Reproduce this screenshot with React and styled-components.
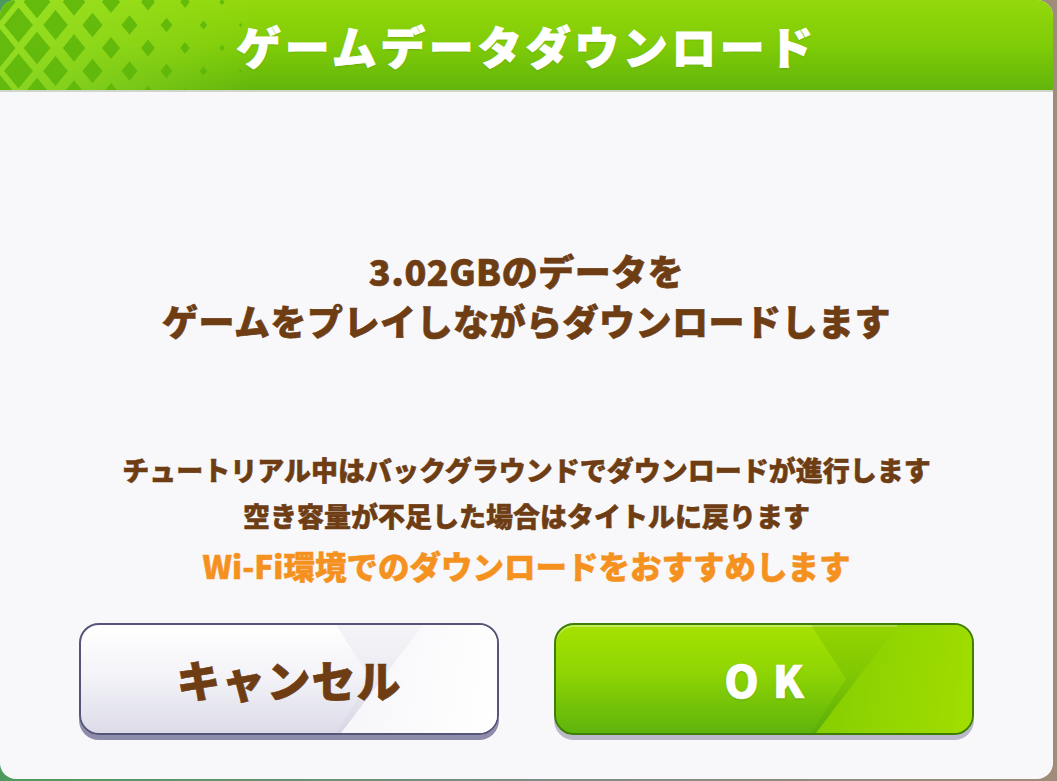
import React from 'react';
import styled, { createGlobalStyle } from 'styled-components';

const GlobalStyle = createGlobalStyle`
  html, body {
    margin: 0;
    padding: 0;
    height: 781px;
    overflow: hidden;
  }
  body {
    background: linear-gradient(90deg, #4e9a5c 0%, #7d8c86 50%, #a08c78 100%);
    font-family: "Noto Sans CJK JP", "Noto Sans", sans-serif;
  }
`;

const brown = '#6e3d13';

const Dialog = styled.div`
  width: 1053px;
  height: 779px;
  border-radius: 16px;
  overflow: hidden;
  display: flex;
  flex-direction: column;
  background: #f8f8fa;
`;

const Header = styled.div`
  position: relative;
  height: 90px;
  flex-shrink: 0;
  display: flex;
  align-items: center;
  justify-content: center;
  background: linear-gradient(180deg, #93d80b 0%, #80cc08 50%, #62b50b 100%);
  border-bottom: 2px solid #cfd5c8;
`;

const Lattice = styled.svg`
  position: absolute;
  left: 0;
  top: 0;
`;

const Title = styled.h1`
  position: relative;
  margin: 0;
  color: #ffffff;
  font-size: 45px;
  font-weight: 900;
  letter-spacing: 3.5px;
  -webkit-text-stroke: 0.8px #ffffff;
  text-shadow: 0 1px 2px rgba(60, 110, 0, 0.35);
`;

const Body = styled.div`
  flex: 1;
  display: flex;
  flex-direction: column;
  align-items: center;
  padding-top: 153px;
`;

const Message = styled.p`
  margin: 0;
  color: ${brown};
  font-size: 36px;
  font-weight: 900;
  letter-spacing: 0.5px;
  line-height: 50px;
  text-align: center;
  -webkit-text-stroke: 0.6px ${brown};
`;

const Notes = styled.div`
  margin-top: 102px;
  display: flex;
  flex-direction: column;
  align-items: center;
`;

const Note = styled.p`
  margin: 0;
  color: ${props => (props.accent ? '#f5921f' : brown)};
  font-size: ${props => (props.accent ? '31.5px' : '27px')};
  font-weight: 900;
  line-height: ${props => (props.accent ? '52px' : '46px')};
  -webkit-text-stroke: 0.5px ${props => (props.accent ? '#f5921f' : brown)};
`;

const ButtonRow = styled.div`
  margin-top: 32px;
  display: flex;
  gap: 55px;
`;

const Button = styled.button`
  position: relative;
  width: 420px;
  height: 112px;
  border-radius: 20px;
  overflow: hidden;
  cursor: pointer;
  display: flex;
  align-items: center;
  justify-content: center;
  padding: 0;
  font-family: "Noto Sans CJK JP", "Noto Sans", sans-serif;
  font-weight: 900;
  font-size: 44px;
  border: 2px solid ${props => (props.primary ? '#3e7d06' : '#55557a')};
  color: ${props => (props.primary ? '#ffffff' : brown)};
  -webkit-text-stroke: 0.6px ${props => (props.primary ? '#ffffff' : brown)};
  letter-spacing: ${props => (props.primary ? '14px' : '1px')};
  background: ${props =>
    props.primary
      ? 'linear-gradient(180deg, #a6e200 0%, #8ed404 45%, #5fb40c 100%)'
      : 'linear-gradient(180deg, #ffffff 0%, #f4f4f9 45%, #dcdbe8 100%)'};
  box-shadow: ${props =>
    props.primary
      ? '0 5px 0 #b9b9c9, inset 0 2px 0 rgba(255,255,255,0.35)'
      : '0 5px 0 #8e8cab, inset 0 2px 0 #ffffff'};
  text-shadow: ${props => (props.primary ? '0 1px 2px rgba(40,90,0,0.35)' : 'none')};

  /* chevron tint right of the ">" edge */
  &::before {
    content: '';
    position: absolute;
    inset: 0;
    clip-path: polygon(255px 0, 100% 0, 100% 100%, 255px 100%, 290px 50%);
    background: ${props =>
      props.primary ? 'rgba(70, 150, 0, 0.18)' : 'rgba(190, 190, 210, 0.16)'};
  }

  /* glossy wedge right of the "/" edge */
  &::after {
    content: '';
    position: absolute;
    inset: 0;
    clip-path: polygon(342px 0, 100% 0, 100% 100%, 260px 100%);
    background: ${props =>
      props.primary
        ? 'linear-gradient(100deg, #5cb204 0%, #78c602 45%, #a2de00 100%)'
        : 'linear-gradient(100deg, #dadae5 0%, #f2f2f7 45%, #ffffff 100%)'};
  }
`;

const Label = styled.span`
  position: relative;
  z-index: 1;
  margin-right: ${props => (props.spaced ? '-14px' : '0')};
`;

// diamond lattice in the header's left corner, fading out to the right
const diamonds = [];
for (let j = -1; j < 6; j++) {
  const offset = j % 2 === 0 ? 0 : 18.5;
  for (let i = 0; i < 8; i++) {
    const x = i * 37 + offset;
    const hx = 15.5 - x * 0.058;
    if (hx <= 1) continue;
    const hy = hx * 1.22;
    const y = j * 23 + 2;
    diamonds.push(
      `M${x} ${y - hy}L${x + hx} ${y}L${x} ${y + hy}L${x - hx} ${y}Z`
    );
  }
}

const HeaderLattice = () => (
  <Lattice width="260" height="90" viewBox="0 0 260 90">
    <defs>
      <linearGradient id="latticeFade" x1="0" y1="0" x2="1" y2="0">
        <stop offset="0" stopColor="#9be22a" stopOpacity="0.75" />
        <stop offset="0.7" stopColor="#9be22a" stopOpacity="0.25" />
        <stop offset="1" stopColor="#9be22a" stopOpacity="0" />
      </linearGradient>
    </defs>
    <rect x="0" y="0" width="260" height="90" fill="url(#latticeFade)" />
    <path d={diamonds.join('')} fill="#5cb509" opacity="0.85" />
  </Lattice>
);

const App = () => {
  return (
    <>
      <GlobalStyle />
      <Dialog>
        <Header>
          <HeaderLattice />
          <Title>ゲームデータダウンロード</Title>
        </Header>
        <Body>
          <Message>
            3.02GBのデータを
            <br />
            ゲームをプレイしながらダウンロードします
          </Message>
          <Notes>
            <Note>チュートリアル中はバックグラウンドでダウンロードが進行します</Note>
            <Note>空き容量が不足した場合はタイトルに戻ります</Note>
            <Note accent>Wi-Fi環境でのダウンロードをおすすめします</Note>
          </Notes>
          <ButtonRow>
            <Button>
              <Label>キャンセル</Label>
            </Button>
            <Button primary>
              <Label spaced>OK</Label>
            </Button>
          </ButtonRow>
        </Body>
      </Dialog>
    </>
  );
};

export default App;
